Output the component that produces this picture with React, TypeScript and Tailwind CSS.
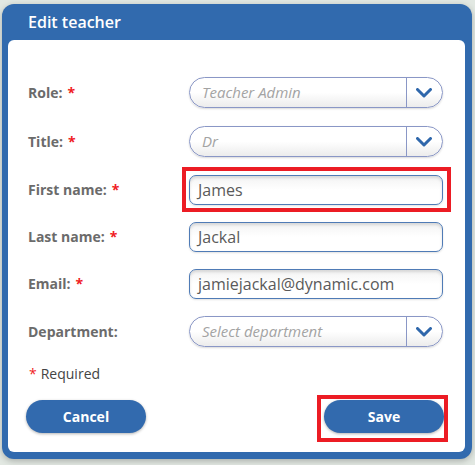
import React from 'react';

const font = { fontFamily: '"Open Sans", "Noto Sans", sans-serif' };

const Chevron = () => (
  <svg width="16" height="10" viewBox="0 0 16 10" fill="none">
    <polyline points="1.5,1.5 8,8 14.5,1.5" stroke="#2f67ab" strokeWidth="3" strokeLinecap="round" strokeLinejoin="round" />
  </svg>
);

const Label: React.FC<{ text: string; required?: boolean }> = ({ text, required }) => (
  <div className="w-[181px] shrink-0 pl-[20px] text-[14px] font-bold text-[#6b6b6b]">
    {text}
    {required && <span className="ml-[5px] text-[#f01c24]">*</span>}
  </div>
);

const Select: React.FC<{ value: string }> = ({ value }) => (
  <div className="flex h-[31px] w-[254px] items-stretch overflow-hidden rounded-full border border-[#8a97c6] bg-gradient-to-b from-white via-white to-[#ececec] shadow-[0_1px_2px_rgba(0,0,0,0.15)]">
    <div className="flex flex-1 items-center pl-[12px] text-[15px] italic text-[#a3a3a3]">{value}</div>
    <div className="flex w-[36px] items-center justify-center border-l border-[#8a97c6] pr-[2px]">
      <Chevron />
    </div>
  </div>
);

const Input: React.FC<{ value: string }> = ({ value }) => (
  <div className="flex h-[30px] w-[254px] items-center rounded-[7px] border border-[#4f7bb6] bg-gradient-to-b from-[#f3f3f3] via-white to-white pl-[8px] text-[16px] text-[#5a5a5a] shadow-[inset_0_2px_3px_rgba(0,0,0,0.12),0_1px_2px_rgba(0,0,0,0.12)]">
    {value}
  </div>
);

export default function App() {
  return (
    <div className="relative h-[465px] w-[475px] overflow-hidden bg-[#e2e8e2]" style={font}>
      <div className="ml-[2px] mt-[4px] flex h-[455px] w-[470px] flex-col rounded-[12px] bg-[#316aae] pb-[7px] pl-[6px] pr-[7px] shadow-[0_2px_6px_rgba(0,0,0,0.25)]">
        <div className="flex h-[36px] items-center pl-[20px] text-[16px] font-semibold text-white">Edit teacher</div>
        <div className="flex flex-1 flex-col rounded-[6px] bg-white">
          <div className="mt-[37px] flex h-[31px] items-center">
            <Label text="Role:" required />
            <Select value="Teacher Admin" />
          </div>
          <div className="mt-[18px] flex h-[31px] items-center">
            <Label text="Title:" required />
            <Select value="Dr" />
          </div>
          <div className="mt-[17px] flex h-[31px] items-center">
            <Label text="First name:" required />
            <Input value="James" />
          </div>
          <div className="mt-[16px] flex h-[31px] items-center">
            <Label text="Last name:" required />
            <Input value="Jackal" />
          </div>
          <div className="mt-[16px] flex h-[31px] items-center">
            <Label text="Email:" required />
            <Input value="jamiejackal@dynamic.com" />
          </div>
          <div className="mt-[17px] flex h-[31px] items-center">
            <Label text="Department:" />
            <Select value="Select department" />
          </div>
          <div className="mt-[16px] pl-[21px] text-[14px] text-[#444]">
            <span className="mr-[4px] text-[#f01c24]">*</span>Required
          </div>
          <div className="mt-[16px] flex items-center justify-between pl-[18px] pr-[21px]">
            <button className="h-[33px] w-[120px] rounded-full bg-[#326aae] text-[14px] font-bold text-white shadow-[0_1px_3px_rgba(0,0,0,0.3)]">Cancel</button>
            <button className="h-[33px] w-[120px] rounded-full bg-[#326aae] text-[14px] font-bold text-white shadow-[0_1px_3px_rgba(0,0,0,0.3)]">Save</button>
          </div>
        </div>
      </div>
      <div className="absolute left-[182px] top-[167px] h-[45px] w-[269px] border-[4px] border-[#ec1c24]" />
      <div className="absolute left-[317px] top-[395px] h-[47px] w-[131px] border-[4px] border-[#ec1c24]" />
    </div>
  );
}
